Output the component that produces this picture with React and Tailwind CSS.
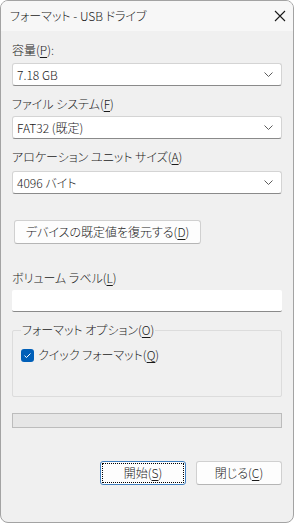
import React from 'react';

const U = ({ children }) => <span className="underline underline-offset-2">{children}</span>;

const Chevron = () => (
  <svg width="9" height="5" viewBox="0 0 9 5" className="shrink-0">
    <path d="M0.5 0.5 L4.5 4.5 L8.5 0.5" fill="none" stroke="#5c5c5c" strokeWidth="1" />
  </svg>
);

const Combo = ({ value }) => (
  <div className="flex h-[23px] items-center justify-between rounded-[3px] border border-[#d4d4d4] border-b-[#8a8a8a] bg-white pl-[4px] pr-[8px]">
    <span className="text-[12px] text-[#1a1a1a]">{value}</span>
    <Chevron />
  </div>
);

const Label = ({ children }) => (
  <div className="h-[16px] text-[12px] leading-[16px] text-[#1a1a1a]">{children}</div>
);

export default function App() {
  return (
    <div className="h-[523px] w-[294px] bg-white font-['Noto_Sans_CJK_JP','Noto_Sans',sans-serif] font-light [font-feature-settings:'palt']">
      <div className="flex h-full w-full flex-col overflow-hidden rounded-[8px] border border-[#a3a3a3] bg-[#f0f0f0]">
        {/* title bar */}
        <div className="flex h-[30px] shrink-0 items-center justify-between bg-[#f7f7f7] pl-[9px] pr-[7px]">
          <span className="text-[12px] text-[#1a1a1a]">フォーマット - USB ドライブ</span>
          <svg width="12" height="12" viewBox="0 0 12 12">
            <path d="M1 1 L11 11 M11 1 L1 11" stroke="#1a1a1a" strokeWidth="1.1" />
          </svg>
        </div>

        <div className="flex flex-col px-[11px]">
          <div className="mt-[11px]"><Label>容量(<U>P</U>):</Label></div>
          <div className="mt-[5px]"><Combo value="7.18 GB" /></div>

          <div className="mt-[10px]"><Label>ファイル システム(<U>F</U>)</Label></div>
          <div className="mt-[4px]"><Combo value="FAT32 (既定)" /></div>

          <div className="mt-[10px]"><Label>アロケーション ユニット サイズ(<U>A</U>)</Label></div>
          <div className="mt-[6px]"><Combo value="4096 バイト" /></div>

          <button className="ml-[2px] mt-[26px] flex h-[24px] w-[187px] items-center justify-center rounded-[3px] border border-[#d0d0d0] border-b-[#b5b5b5] bg-[#fdfdfd] text-[12px] text-[#1a1a1a]">
            デバイスの既定値を復元する(<U>D</U>)
          </button>

          <div className="mt-[26px]"><Label>ボリューム ラベル(<U>L</U>)</Label></div>
          <div className="mt-[4px] h-[22px] rounded-[2px] border-b border-[#8a8a8a] bg-white" />

          {/* group box */}
          <div className="mt-[18px] h-[67px] rounded-[2px] border border-[#dcdcdc] pl-[8px]">
            <div className="-mt-[9px] w-fit bg-[#f0f0f0] px-[1px] text-[12px] leading-[16px] text-[#1a1a1a]">
              フォーマット オプション(<U>O</U>)
            </div>
            <div className="mt-[9px] flex items-center gap-[4px]">
              <div className="flex h-[13px] w-[13px] items-center justify-center rounded-[3px] bg-[#005fb8]">
                <svg width="9" height="7" viewBox="0 0 9 7">
                  <path d="M1.5 3.6 L3.5 5.5 L7.5 1.5" fill="none" stroke="white" strokeWidth="1" />
                </svg>
              </div>
              <span className="text-[12px] leading-[16px] text-[#1a1a1a]">クイック フォーマット(<U>Q</U>)</span>
            </div>
          </div>

          {/* progress */}
          <div className="mt-[16px] h-[15px] border border-[#bcbcbc] bg-[#e6e6e6]" />

          <div className="mt-[33px] flex justify-end gap-[10px]">
            <button className="flex h-[24px] w-[86px] rounded-[3px] border border-[#3f7fbf] bg-[#fdfdfd] p-[1px]">
              <span className="flex h-full w-full items-center justify-center border border-dotted border-black text-[12px] text-[#1a1a1a]">
                開始(<U>S</U>)
              </span>
            </button>
            <button className="flex h-[24px] w-[86px] items-center justify-center rounded-[3px] border border-[#d0d0d0] border-b-[#b5b5b5] bg-[#fdfdfd] text-[12px] text-[#1a1a1a]">
              閉じる(<U>C</U>)
            </button>
          </div>
        </div>
      </div>
    </div>
  );
}
